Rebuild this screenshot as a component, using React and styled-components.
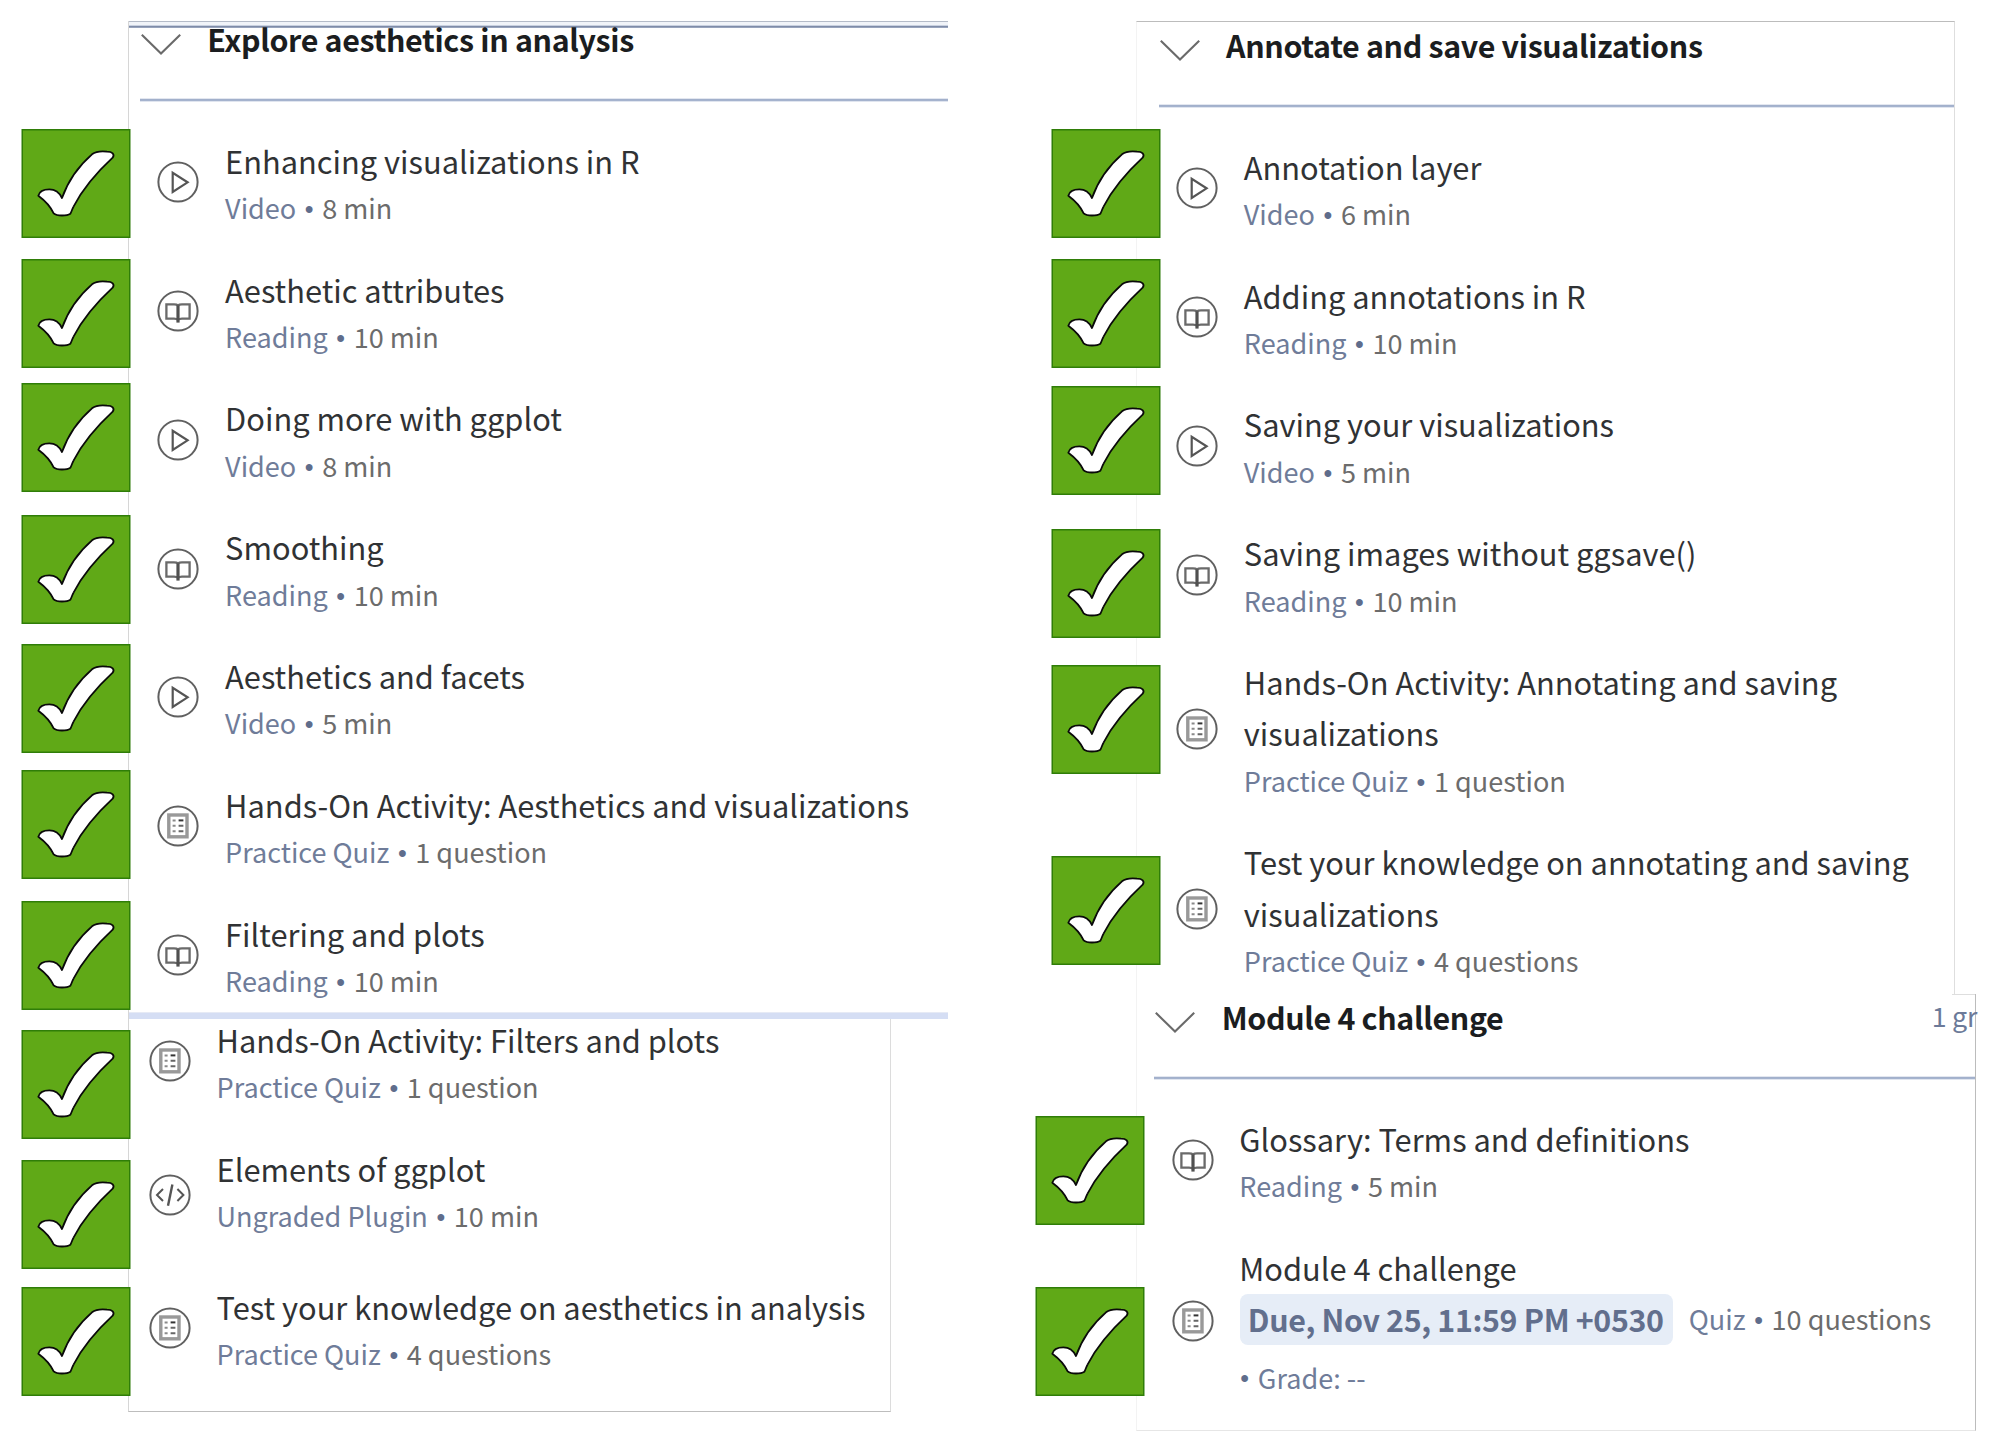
import React from "react";
import styled, { createGlobalStyle } from "styled-components";

const GlobalStyle = createGlobalStyle`
  *, *::before, *::after { box-sizing: border-box; }
  body {
    margin: 0;
    background: #fff;
    font-family: "Noto Sans CJK SC", "Noto Sans", sans-serif;
    overflow: hidden;
  }
`;

const Page = styled.main`
  display: flex;
  width: 1999px;
  height: 1453px;
  padding-left: 21px;
  overflow: hidden;
`;

const Column = styled.div`
  display: flex;
  width: ${(p) => p.$width}px;
  flex: none;
`;

const BadgeStack = styled.div`
  display: flex;
  flex-direction: column;
  flex: none;
  width: ${(p) => p.$width}px;
  position: relative;
  z-index: 1;
`;

const BadgeSvg = styled.svg`
  display: block;
  flex: none;
  width: 110px;
  height: 109px;
  margin-top: ${(p) => p.$gap}px;
  margin-left: ${(p) => p.$shift || 0}px;
`;

const Panels = styled.div`
  display: flex;
  flex-direction: column;
  padding-top: 21px;
`;

const Panel = styled.section`
  display: flex;
  flex-direction: column;
  flex: none;
  width: ${(p) => p.$width}px;
  height: ${(p) => p.$height}px;
  border-style: solid;
  border-color: ${(p) => p.$edges};
  border-width: ${(p) => p.$borders};
`;

const ModulePanel = styled(Panel)`
  background: linear-gradient(#dedede, #dedede) right top / 23px 1px no-repeat;
`;

const TopBand = styled.div`
  flex: none;
  height: 7px;
  background: linear-gradient(
    #b4bbc8 0 1px, #f1f4f9 1px 4px, #c9d1e0 4px 5px, #7f8ca8 5px 6px, #98a4bd 6px 7px
  );
`;

const BottomBand = styled.div`
  flex: none;
  width: 820px;
  height: 7px;
  border-left: 1px solid #d6d6d6;
  background: linear-gradient(#e6eaf5 0 1px, #d5def4 1px 7px);
`;

const Header = styled.header`
  display: flex;
  flex: none;
  align-items: flex-start;
  gap: 26.6px;
  height: ${(p) => p.$height}px;
  padding-top: ${(p) => p.$top}px;
  padding-left: ${(p) => p.$inset + 1}px;
`;

const Chevron = styled.svg`
  flex: none;
  width: 40px;
  height: 22px;
  margin-top: 6px;
`;

const Heading = styled.h2`
  margin: 1px 0 0;
  font-size: 30.4px;
  line-height: 20px;
  font-weight: 700;
  letter-spacing: -0.34px;
  white-space: nowrap;
  color: #1b1d20;
`;

const GradedCount = styled.span`
  margin-left: auto;
  margin-right: -2px;
  white-space: nowrap;
  font-size: 26.8px;
  line-height: 40px;
  margin-top: -9.5px;
  letter-spacing: -0.3px;
  color: #6c7a99;
`;

const Divider = styled.div`
  flex: none;
  height: 4px;
  margin-left: ${(p) => p.$inset}px;
  background: linear-gradient(
    #e3e7f0 0 1px, #a2b0cb 1px 2px, #a5b3ce 2px 3px, #e0e5ef 3px 4px
  );
`;

const List = styled.ul`
  display: flex;
  flex-direction: column;
  gap: 34.8px;
  margin: ${(p) => p.$top}px 0 0;
  padding: 0 0 0 ${(p) => p.$inset}px;
  list-style: none;
`;

const Item = styled.li`
  display: flex;
  align-items: center;
  gap: 25.8px;
`;

const IconSvg = styled.svg`
  flex: none;
  display: block;
  width: 42px;
  height: 42px;
  margin-top: 0.8px;
`;

const Body = styled.div`
  display: flex;
  flex-direction: column;
  white-space: nowrap;
`;

const Title = styled.div`
  font-size: 30.8px;
  line-height: 51.4px;
  color: #303234;
`;

const Meta = styled.div`
  display: flex;
  height: ${(p) => (p.$tall ? 51.7 : 42.6)}px;
  font-size: 27.05px;
  line-height: 44px;
  color: #6c6c6c;
`;

const Kind = styled.span`
  color: #6f7c99;
`;

const Bullet = styled.span`
  width: ${(p) => (p.$lead ? 18.5 : 26)}px;
  padding-top: 1px;
  padding-left: ${(p) => (p.$lead ? 1 : 0)}px;
  text-align: ${(p) => (p.$lead ? "left" : "center")};
  font-family: "Liberation Sans", Arial, sans-serif;
  font-size: 25px;
  color: #5f6d8c;
`;

const DueLine = styled.div`
  display: flex;
  gap: 16px;
  height: 52px;
  padding: 1px 0 0 0.5px;
  font-size: 27.05px;
  line-height: 50px;
  color: #6c6c6c;
`;

const DuePill = styled.span`
  width: 433px;
  height: 51px;
  padding-left: 8px;
  border-radius: 8px;
  background: #e6edf7;
  color: #626f8d;
  font-size: 30.4px;
  font-weight: 700;
  line-height: 51px;
  letter-spacing: -0.35px;
`;

const KindGroup = styled.span`
  display: flex;
`;

const GradeLine = styled.div`
  display: flex;
  height: 54.8px;
  padding-top: 3.8px;
  font-size: 27.05px;
  line-height: 57px;
`;

function CheckBadge({ gap, shift }) {
  return (
    <BadgeSvg $gap={gap} $shift={shift} viewBox="0 0 110 109">
      <rect x="0.5" y="0" width="109" height="109" fill="#2f7d08" />
      <rect x="2" y="1.5" width="106" height="106" fill="#60a917" />
      <path
        transform="scale(0.33333) translate(-33 -27)"
        d="M85 227C88 214 100 208 118 208C136 208 148 217 156 234C174 183 208 136 246 103C258 94 274 93 291 95C307 95 315 102 308 113C255 162 216 211 191 259C186 268 185 275 181 281C171 288 141 289 131 280C120 256 104 241 85 227Z"
        fill="#fff"
        stroke="#0a0a0a"
        strokeWidth="5.4"
        strokeLinejoin="round"
      />
    </BadgeSvg>
  );
}

const glyphs = {
  video: <path d="M-5.3 -9.2V10L9.6 0.3Z" fill="none" stroke="#555" strokeWidth="2.2" />,
  reading: (
    <g fill="none" stroke="#6a6a6a" strokeWidth="2.3">
      <path d="M0 -5.6C-1 -6.5 -2 -6.6 -4 -6.6H-11.6V7.6H-4C-2 7.6 -1 7.8 0 8.8C1 7.8 2 7.6 4 7.6H11.6V-6.6H4C2 -6.6 1 -6.5 0 -5.6Z" />
      <path d="M0 -5.6V11.6" stroke="#505050" strokeWidth="3.2" />
    </g>
  ),
  quiz: (
    <g>
      <rect x="-9.2" y="-11" width="18.2" height="21.8" fill="#fff" stroke="#999" strokeWidth="3.4" />
      <g stroke="#8a8a8a" strokeWidth="2">
        <path d="M-5.4 -5.6H-2.4M-5.4 -0.2H-2.4M-5.4 5.2H-2.4" />
        <path d="M0.6 -0.2H5.4M0.6 5.2H5.4" stroke="#666" />
        <path d="M0.6 -5.6H5.4" stroke="#333" />
      </g>
    </g>
  ),
  plugin: (
    <g fill="none" stroke="#555" strokeWidth="2">
      <path d="M-7 -6L-13 0L-7 6M7.4 -6L13.4 0L7.4 6" />
      <path d="M2.4 -10.4L-2 10.8" strokeWidth="2.4" />
    </g>
  ),
};

function KindIcon({ type }) {
  return (
    <IconSvg viewBox="-21 -21 42 42">
      <circle r="19.6" fill="none" stroke="#606060" strokeWidth="2" />
      {glyphs[type]}
    </IconSvg>
  );
}

function SectionHeader({ title, inset, height, top, count }) {
  return (
    <>
      <Header $inset={inset} $height={height} $top={top}>
        <Chevron viewBox="0 0 40 22">
          <path d="M0.8 0.8L20 19.6L39.2 0.8" fill="none" stroke="#6a6a6a" strokeWidth="2.1" />
        </Chevron>
        <Heading>{title}</Heading>
        {count && <GradedCount>{count}</GradedCount>}
      </Header>
      <Divider $inset={inset} />
    </>
  );
}

function Lesson({ type, title, kind, length, tall }) {
  return (
    <Item>
      <KindIcon type={type} />
      <Body>
        {[].concat(title).map((line) => (
          <Title key={line}>{line}</Title>
        ))}
        <Meta $tall={tall}>
          <Kind>{kind}</Kind>
          <Bullet>•</Bullet>
          <span>{length}</span>
        </Meta>
      </Body>
    </Item>
  );
}

const video = (title, length) => ({ type: "video", kind: "Video", title, length });
const reading = (title, length) => ({ type: "reading", kind: "Reading", title, length });
const practice = (title, length) => ({ type: "quiz", kind: "Practice Quiz", title, length });

const aesthetics = [
  video("Enhancing visualizations in R", "8 min"),
  reading("Aesthetic attributes", "10 min"),
  video("Doing more with ggplot", "8 min"),
  reading("Smoothing", "10 min"),
  video("Aesthetics and facets", "5 min"),
  practice("Hands-On Activity: Aesthetics and visualizations", "1 question"),
  reading("Filtering and plots", "10 min"),
];

const aestheticsRest = [
  practice("Hands-On Activity: Filters and plots", "1 question"),
  { type: "plugin", kind: "Ungraded Plugin", title: "Elements of ggplot", length: "10 min", tall: true },
  practice("Test your knowledge on aesthetics in analysis", "4 questions"),
];

const annotate = [
  video("Annotation layer", "6 min"),
  reading("Adding annotations in R", "10 min"),
  video("Saving your visualizations", "5 min"),
  reading("Saving images without ggsave()", "10 min"),
  practice(["Hands-On Activity: Annotating and saving", "visualizations"], "1 question"),
  practice(["Test your knowledge on annotating and saving", "visualizations"], "4 questions"),
];

const leftBadges = [129, 21, 15, 23, 20, 17, 22, 20, 21, 18];
const rightBadges = [129, 21, 18, 34, 27, 82];
const moduleBadges = [151, 62];

const lessons = (items) => items.map((item) => <Lesson key={[].concat(item.title)[0]} {...item} />);

export default function App() {
  return (
    <>
      <GlobalStyle />
      <Page>
        <Column $width={1030}>
          <BadgeStack $width={107}>
            {leftBadges.map((gap, i) => (
              <CheckBadge key={i} gap={gap} />
            ))}
          </BadgeStack>
          <Panels>
            <Panel $width={820} $height={991} $borders="0 0 0 1px" $edges="transparent transparent transparent #d6d6d6">
              <TopBand />
              <SectionHeader title="Explore aesthetics in analysis" inset={10.7} height={70} top={0} />
              <List $inset={28.3} $top={32.8}>{lessons(aesthetics)}</List>
            </Panel>
            <BottomBand />
            <Panel $width={763} $height={393} $borders="0 1px 1px 1px" $edges="transparent #dcdcdc #bdbdbd #d6d6d6">
              <List $inset={19.8} $top={-5.2}>{lessons(aestheticsRest)}</List>
            </Panel>
          </Panels>
        </Column>
        <Column $width={940}>
          <BadgeStack $width={85}>
            {rightBadges.map((gap, i) => (
              <CheckBadge key={i} gap={gap} />
            ))}
            {moduleBadges.map((gap, i) => (
              <CheckBadge key={i} gap={gap} shift={-16.5} />
            ))}
          </BadgeStack>
          <Panels>
            <Panel $width={819} $height={973} $borders="1px 1px 0 1px" $edges="#bcbcbc #dedede transparent #f3f3f3">
              <SectionHeader title="Annotate and save visualizations" inset={21.5} height={82} top={12.4} />
              <List $inset={39} $top={32.9}>{lessons(annotate)}</List>
            </Panel>
            <ModulePanel $width={840} $height={437} $borders="0 1px 1px 1px" $edges="transparent #bcbcbc #e6e6e6 #f3f3f3">
              <SectionHeader title="Module 4 challenge" inset={17.2} height={82} top={11.7} count="1 gr" />
              <List $inset={34.5} $top={32.8}>
                {lessons([reading("Glossary: Terms and definitions", "5 min")])}
                <Item>
                  <KindIcon type="quiz" />
                  <Body>
                    <Title>Module 4 challenge</Title>
                    <DueLine>
                      <DuePill>Due, Nov 25, 11:59 PM +0530</DuePill>
                      <KindGroup>
                        <Kind>Quiz</Kind>
                        <Bullet>•</Bullet>
                        <span>10 questions</span>
                      </KindGroup>
                    </DueLine>
                    <GradeLine>
                      <Bullet $lead>•</Bullet>
                      <Kind>Grade: --</Kind>
                    </GradeLine>
                  </Body>
                </Item>
              </List>
            </ModulePanel>
          </Panels>
        </Column>
      </Page>
    </>
  );
}
